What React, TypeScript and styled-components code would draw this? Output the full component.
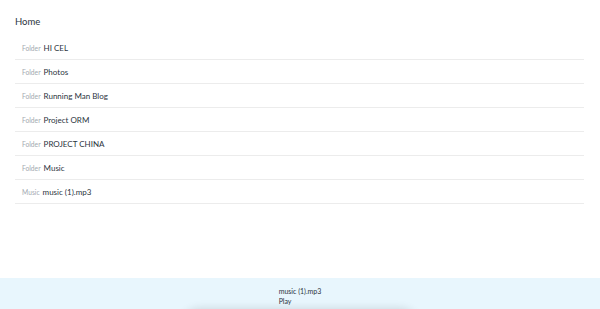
import styled, { createGlobalStyle } from "styled-components";

const GlobalStyle = createGlobalStyle`
  html, body {
    margin: 0;
    padding: 0;
    background: #ffffff;
    font-family: Lato, "Noto Sans", sans-serif;
    color: #2b3440;
  }
`;

const Page = styled.div`
  min-height: 100vh;
  display: flex;
  flex-direction: column;
`;

const Main = styled.main`
  flex: 1;
  padding: 15px 16px 0 15px;
`;

const Title = styled.div`
  font-size: 9.5px;
  line-height: 14px;
  color: #2b3440;
  margin-bottom: 7px;
`;

const List = styled.ul`
  list-style: none;
  margin: 0;
  padding: 0;
`;

const Row = styled.li`
  display: flex;
  align-items: center;
  gap: 3px;
  height: 23px;
  padding-left: 7px;
  border-bottom: 1px solid #ececec;
`;

const Kind = styled.span`
  font-size: 6.7px;
  color: #a3a9b0;
`;

const Name = styled.span`
  font-size: 8px;
  color: #2b3440;
`;

const Player = styled.footer`
  position: fixed;
  left: 0;
  right: 0;
  bottom: 0;
  height: 31px;
  background: #e8f6fd;
  display: flex;
  justify-content: center;
  padding-top: 8px;
  box-sizing: border-box;
  overflow: hidden;
`;

const Track = styled.div`
  font-size: 7px;
  line-height: 10px;
  color: #2b3440;
`;

const Audio = styled.div`
  position: absolute;
  left: 50%;
  transform: translateX(-50%);
  top: 35px;
  width: 230px;
  height: 30px;
  border-radius: 15px;
  background: #f1f3f4;
  box-shadow: 0 0 10px 4px rgba(0, 0, 0, 0.14);
`;

const items = [
  { kind: "Folder", name: "HI CEL" },
  { kind: "Folder", name: "Photos" },
  { kind: "Folder", name: "Running Man Blog" },
  { kind: "Folder", name: "Project ORM" },
  { kind: "Folder", name: "PROJECT CHINA" },
  { kind: "Folder", name: "Music" },
  { kind: "Music", name: "music (1).mp3" },
];

export default function App() {
  return (
    <Page>
      <GlobalStyle />
      <Main>
        <Title>Home</Title>
        <List>
          {items.map((it) => (
            <Row key={it.name}>
              <Kind>{it.kind}</Kind>
              <Name>{it.name}</Name>
            </Row>
          ))}
        </List>
      </Main>
      <Player>
        <Track>
          <div>music (1).mp3</div>
          <div>Play</div>
        </Track>
        <Audio />
      </Player>
    </Page>
  );
}
